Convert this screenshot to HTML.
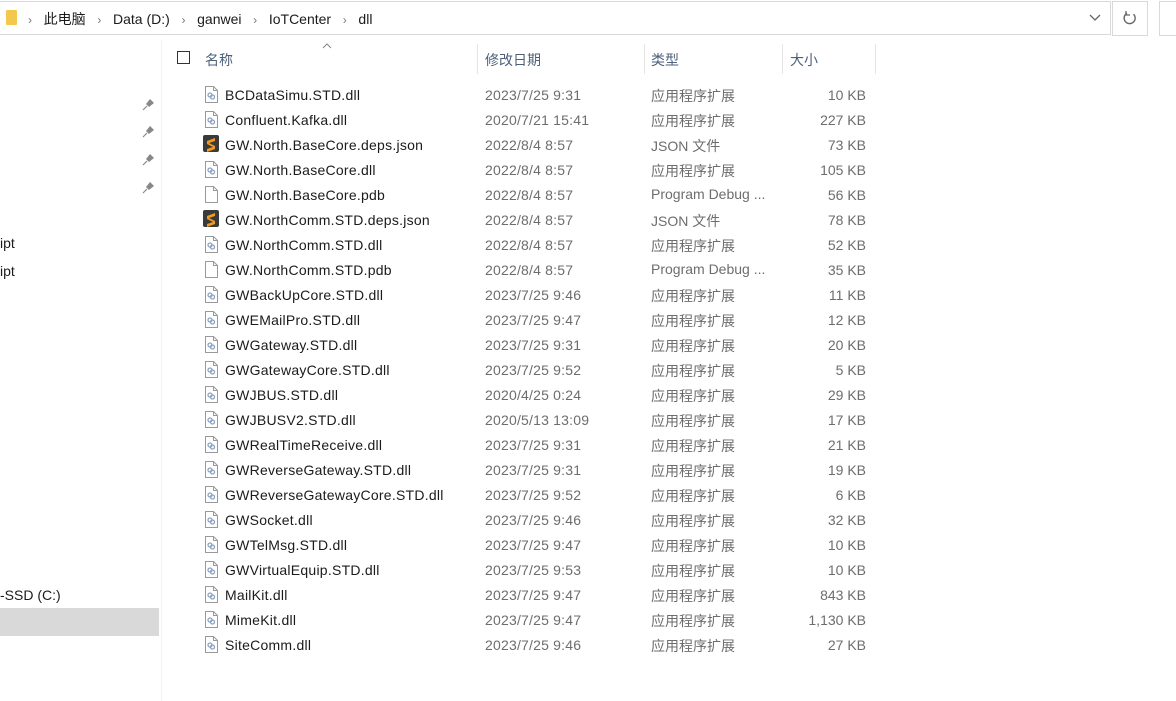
<!DOCTYPE html>
<html><head><meta charset="utf-8"><style>
body{margin:0;width:1176px;height:701px;background:#fff;position:relative;overflow:hidden;font-family:"Segoe UI","Liberation Sans","Noto Sans CJK SC",sans-serif;font-size:14px;color:#1b1b1b}
.abs{position:absolute}
.addr{left:-1px;top:1px;width:1112px;height:34px;border:1px solid #d9d9d9;box-sizing:border-box}
.ref{left:1112px;top:1px;width:36px;height:35px;border:1px solid #d9d9d9;box-sizing:border-box}
.ref2{left:1159px;top:1px;width:30px;height:35px;border:1px solid #d9d9d9;box-sizing:border-box}
.bc{top:9px;font-size:14px;white-space:nowrap}
.chev{color:#777;font-size:12px}
.hdr{top:50px;font-size:14px;color:#4c607a}
.div{top:44px;width:1px;height:30px;background:#e5e5e5}
.row{position:absolute;left:0;height:25px;width:900px}
.row span{position:absolute;top:4px;white-space:nowrap}
.n{left:225px;letter-spacing:0.25px}.d{left:485px;color:#6d6d6d;letter-spacing:0.2px}.t{left:651px;color:#6d6d6d;top:3px!important}.s{right:34px;color:#6d6d6d;text-align:right}
.ic{position:absolute;left:205px;top:3px;width:13px;height:17px}
</style></head><body>
<div class="abs addr"></div>
<div class="abs" style="left:6px;top:10px;width:11px;height:15px;background:#f2c94c;border-radius:1px"></div>
<div class="abs bc" style="left:28px"><span class="chev">›</span>&nbsp;&nbsp; 此电脑 &nbsp;&nbsp;<span class="chev">›</span>&nbsp;&nbsp; Data (D:) &nbsp;&nbsp;<span class="chev">›</span>&nbsp;&nbsp; ganwei &nbsp;&nbsp;<span class="chev">›</span>&nbsp;&nbsp; IoTCenter &nbsp;&nbsp;<span class="chev">›</span>&nbsp;&nbsp; dll</div>
<svg class="abs" style="left:1089px;top:14px" width="12" height="8"><path d="M1 1l5 5 5-5" stroke="#666" stroke-width="1.3" fill="none"/></svg>
<div class="abs ref"></div>
<svg class="abs" style="left:1122px;top:10px" width="16" height="16"><path d="M11.5 4.2A5.5 5.5 0 1 1 5 3.3" stroke="#666" stroke-width="1.4" fill="none"/><path d="M4 1v4h4" stroke="#666" stroke-width="1.3" fill="none"/></svg>
<div class="abs ref2"></div>
<div class="abs" style="left:161px;top:40px;width:1px;height:661px;background:#f3f3f3"></div>
<svg class="abs" style="left:142px;top:97px" width="14" height="100"><g fill="#888"><path d="M4 7l4-5 4 4-5 4z"/><path d="M1 13l4-4" stroke="#888" stroke-width="1.2"/></g><g transform="translate(0,27)" fill="#888"><path d="M4 7l4-5 4 4-5 4z"/><path d="M1 13l4-4" stroke="#888" stroke-width="1.2"/></g><g transform="translate(0,55)" fill="#888"><path d="M4 7l4-5 4 4-5 4z"/><path d="M1 13l4-4" stroke="#888" stroke-width="1.2"/></g><g transform="translate(0,83)" fill="#888"><path d="M4 7l4-5 4 4-5 4z"/><path d="M1 13l4-4" stroke="#888" stroke-width="1.2"/></g></svg>
<div class="abs" style="left:0;top:235px">ipt</div>
<div class="abs" style="left:0;top:263px">ipt</div>
<div class="abs" style="left:0;top:587px">-SSD (C:)</div>
<div class="abs" style="left:0;top:608px;width:159px;height:28px;background:#d9d9d9"></div>
<div class="abs" style="left:177px;top:51px;width:13px;height:13px;border:1px solid #333;box-sizing:border-box"></div>
<svg class="abs" style="left:322px;top:43px" width="10" height="6"><path d="M1 5l4-4 4 4" stroke="#888" fill="none"/></svg>
<div class="abs hdr" style="left:205px">名称</div>
<div class="abs div" style="left:477px"></div>
<div class="abs hdr" style="left:485px">修改日期</div>
<div class="abs div" style="left:644px"></div>
<div class="abs hdr" style="left:651px">类型</div>
<div class="abs div" style="left:782px"></div>
<div class="abs hdr" style="left:790px">大小</div>
<div class="abs div" style="left:875px"></div>
<div id="rows"></div>
<script>
var R=[["BCDataSimu.STD.dll","2023/7/25 9:31","a","10 KB"],["Confluent.Kafka.dll","2020/7/21 15:41","a","227 KB"],["GW.North.BaseCore.deps.json","2022/8/4 8:57","j","73 KB"],["GW.North.BaseCore.dll","2022/8/4 8:57","a","105 KB"],["GW.North.BaseCore.pdb","2022/8/4 8:57","p","56 KB"],["GW.NorthComm.STD.deps.json","2022/8/4 8:57","j","78 KB"],["GW.NorthComm.STD.dll","2022/8/4 8:57","a","52 KB"],["GW.NorthComm.STD.pdb","2022/8/4 8:57","p","35 KB"],["GWBackUpCore.STD.dll","2023/7/25 9:46","a","11 KB"],["GWEMailPro.STD.dll","2023/7/25 9:47","a","12 KB"],["GWGateway.STD.dll","2023/7/25 9:31","a","20 KB"],["GWGatewayCore.STD.dll","2023/7/25 9:52","a","5 KB"],["GWJBUS.STD.dll","2020/4/25 0:24","a","29 KB"],["GWJBUSV2.STD.dll","2020/5/13 13:09","a","17 KB"],["GWRealTimeReceive.dll","2023/7/25 9:31","a","21 KB"],["GWReverseGateway.STD.dll","2023/7/25 9:31","a","19 KB"],["GWReverseGatewayCore.STD.dll","2023/7/25 9:52","a","6 KB"],["GWSocket.dll","2023/7/25 9:46","a","32 KB"],["GWTelMsg.STD.dll","2023/7/25 9:47","a","10 KB"],["GWVirtualEquip.STD.dll","2023/7/25 9:53","a","10 KB"],["MailKit.dll","2023/7/25 9:47","a","843 KB"],["MimeKit.dll","2023/7/25 9:47","a","1,130 KB"],["SiteComm.dll","2023/7/25 9:46","a","27 KB"]];
var T={a:"应用程序扩展",j:"JSON 文件",p:"Program Debug ..."};
var h="";
R.forEach(function(r,i){
var ic;
if(r[2]=="j")ic='<svg class="ic" style="left:203px;top:2px;width:16px;height:17px"><rect width="16" height="17" rx="2" fill="#3a3a3a"/><path d="M4 6l8-3v3L6 8l6 3v3l-8 3v-3l6-2-6-3z" fill="#f29a1f"/></svg>';
else if(r[2]=="p")ic='<svg class="ic"><path d="M.5.5h8l4 4v12H.5z" fill="#fff" stroke="#999"/><path d="M8.5.5v4h4" fill="none" stroke="#999"/></svg>';
else ic='<svg class="ic"><path d="M.5.5h8l4 4v12H.5z" fill="#fff" stroke="#999"/><path d="M8.5.5v4h4" fill="none" stroke="#999"/><circle cx="5" cy="9" r="2" fill="none" stroke="#8aa3c0" stroke-width="1.3"/><circle cx="7.5" cy="11" r="2" fill="none" stroke="#8aa3c0" stroke-width="1.3"/></svg>';
h+='<div class="row" style="top:'+(83+25*i)+'px">'+ic+'<span class="n">'+r[0]+'</span><span class="d">'+r[1]+'</span><span class="t">'+T[r[2]]+'</span><span class="s">'+r[3]+'</span></div>';
});
document.getElementById("rows").innerHTML=h;
</script>
</body></html>
